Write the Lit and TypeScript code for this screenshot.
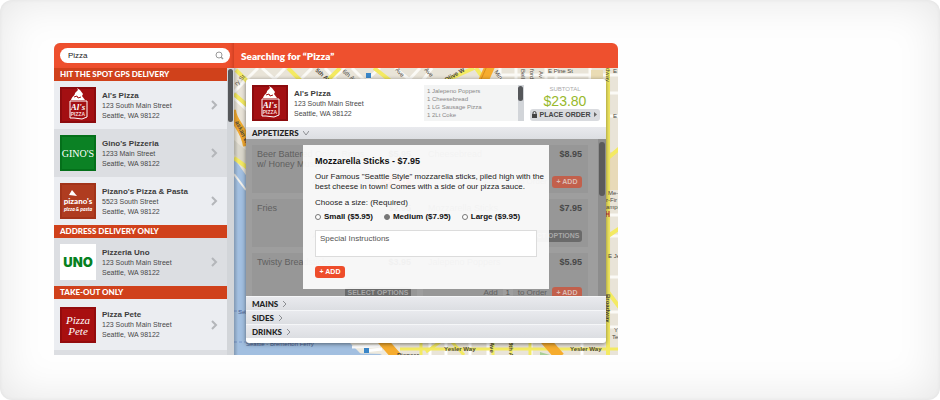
import { LitElement, html, svg, css } from "lit";
import { customElement, property } from "lit/decorators.js";

type Logo = "als" | "ginos" | "pizanos" | "uno" | "pete";
interface Place { name: string; street: string; logo: Logo; }
interface Group { title: string; places: Place[]; }
interface Dish { name: string; note?: string; price: string; options: boolean; }

const GROUPS: Group[] = [
  {
    title: "HIT THE SPOT GPS DELIVERY",
    places: [
      { name: "Al's Pizza", street: "123 South Main Street", logo: "als" },
      { name: "Gino's Pizzeria", street: "1233 Main Street", logo: "ginos" },
      { name: "Pizano's Pizza & Pasta", street: "5523 South Street", logo: "pizanos" },
    ],
  },
  { title: "ADDRESS DELIVERY ONLY", places: [{ name: "Pizzeria Uno", street: "123 South Main Street", logo: "uno" }] },
  { title: "TAKE-OUT ONLY", places: [{ name: "Pizza Pete", street: "123 South Main Street", logo: "pete" }] },
];

const DISHES: Dish[] = [
  { name: "Beer Battered Onion Rings", note: "w/ Honey Mustard", price: "$5.95", options: false },
  { name: "Cheesebread", price: "$8.95", options: false },
  { name: "Fries", price: "$2.95", options: false },
  { name: "Mozzarella Sticks", price: "$7.95", options: true },
  { name: "Twisty Breadsticks", price: "$3.95", options: true },
  { name: "Jalepeno Poppers", price: "$5.95", options: false },
];

const CART = ["1 Jalepeno Poppers", "1 Cheesebread", "1 LG Sausage Pizza", "1 2Lt Coke"];
const SIZES = [["Small", "$5.95"], ["Medium", "$7.95"], ["Large", "$9.95"]];

@customElement("place-logo")
export class PlaceLogo extends LitElement {
  @property() kind: Logo = "als";

  static styles = css`
    :host { display: block; width: 36px; height: 36px; flex: none; }
    svg { display: block; width: 100%; height: 100%; }
    .als { font: italic bold 9px "Liberation Serif", serif; }
    .small { font: bold 5px "Liberation Sans", sans-serif; }
    .ginos { font: 10px "Liberation Serif", serif; }
    .pizanos { font: 900 8px Lato, sans-serif; }
    .pasta { font: italic 900 5px Lato, sans-serif; }
    .uno { font: 900 13px Inter, "Liberation Sans", sans-serif; }
    .pete { font: italic 11px "Liberation Serif", serif; }
  `;

  private art() {
    switch (this.kind) {
      case "als":
        return svg`
          <rect width="36" height="36" fill="#8c0b0e"/>
          <rect x="2" y="2" width="32" height="32" fill="#a30f12"/>
          <path d="M11 13 C12 9 15 9 15 6 L18 3 L17 1 L20 3 L23 7 L22 9 L25 13 Z" fill="#fff"/>
          <path d="M14 10 l3 -1 l1 2 l3 -1" stroke="#a30f12" fill="none"/>
          <path d="M10 14 H27 V30 L22 32 L14 31 L10 31 Z" fill="none" stroke="#fff"/>
          <text class="als" x="18" y="23" text-anchor="middle" fill="#fff">Al's</text>
          <text class="small" x="18" y="29" text-anchor="middle" fill="#f6d8d8">PIZZA</text>`;
      case "ginos":
        return svg`
          <rect width="36" height="36" fill="#04701a"/>
          <rect x="2" y="2" width="32" height="32" fill="#0b8124"/>
          <text class="ginos" x="18" y="22" text-anchor="middle" fill="#fff">GINO'S</text>`;
      case "pizanos":
        return svg`
          <rect width="36" height="36" fill="#a23319"/>
          <rect x="2" y="2" width="32" height="32" fill="#af3c20"/>
          <path d="M9 12 L12 7 L17 13 Z" fill="#fff"/>
          <text class="pizanos" x="18" y="21" text-anchor="middle" fill="#fff">pizano's</text>
          <text class="pasta" x="18" y="28" text-anchor="middle" fill="#fff">pizza &amp; pasta</text>`;
      case "uno":
        return svg`
          <rect width="36" height="36" fill="#fff"/>
          <text class="uno" x="18" y="23" text-anchor="middle" fill="#06811f">UNO</text>`;
      case "pete":
        return svg`
          <rect width="36" height="36" fill="#930b0d"/>
          <rect x="2" y="2" width="32" height="32" fill="#a80f10"/>
          <text class="pete" x="18" y="17" text-anchor="middle" fill="#fff">Pizza</text>
          <text class="pete" x="18" y="28" text-anchor="middle" fill="#fff">Pete</text>`;
    }
  }

  render() {
    return html`<svg viewBox="0 0 36 36" aria-hidden="true">${this.art()}</svg>`;
  }
}

@customElement("street-map")
export class StreetMap extends LitElement {
  static styles = css`
    :host { display: block; }
    svg { display: block; width: 100%; height: 100%; }
    text { font: 6px "Liberation Sans", sans-serif; fill: #4d4a44; }
    .strong { font-weight: bold; fill: #4a483c; }
    .sea { fill: #4a5f92; }
  `;

  render() {
    return html`<svg viewBox="234 68 384 287" preserveAspectRatio="xMinYMin slice" aria-hidden="true">
      <rect x="234" y="68" width="384" height="287" fill="#e9e4d8"/>
      <g stroke="#fbfaf6" stroke-width="3" fill="none">
        <path d="M258 68 L234 92 M285 68 L262 92 M345 68 L325 84 M380 68 L362 84 M420 68 L405 84 M262 68 L280 84 M312 68 L296 84 M325 68 L340 84 M352 68 L368 84 M395 68 L415 84 M432 68 L420 84 M500 68 V84 M516 68 V84 M546 68 V84 M556 68 V84 M590 68 V84 M234 98 L247 110"/>
        <path d="M500 75 H618 M605 93 H618 M605 116 H618 M605 215 H618 M605 236 H618 M605 277 H618 M605 312 H618 M605 327 H618"/>
      </g>
      <path d="M591 70 h12 v12 h-12 z" fill="#eadcb4"/>
      <path d="M609 152 h9 v38 h-9 z" fill="#e8dab8"/>
      <g stroke="#f4ea62" stroke-width="4" fill="none">
        <path d="M236 70 L250 84 M234 94 L248 106 M288 68 L304 84 M340 68 L318 90 M374 68 L392 82 M438 84 L474 68 M476 68 L486 82"/>
        <path d="M608 68 V355 M608 158 L620 148 M608 236 L620 228 M608 292 L620 308"/>
      </g>
      <path d="M490 66 L482 84" stroke="#f6ac2e" stroke-width="10"/>
      <path d="M487 66 L479 84" stroke="#d98b1c"/>
      <path d="M234 158 L248 178 V343 H352 L362 355 H234 Z" fill="#a2bfe0"/>
      <path d="M234 140 L248 152 V172 L234 154 Z" fill="#d9d6ca"/>
      <path d="M234 158 L248 168" stroke="#f4ea62" stroke-width="4"/>
      <path d="M234 174 L246 190" stroke="#f2f0ea" stroke-width="2"/>
      <path d="M232 110 C233 124 244 126 247 146" stroke="#f0a92f" stroke-width="8" fill="none"/>
      <path d="M234 311 H247 M234 342 H350" stroke="#7b98cc" stroke-dasharray="3 2"/>
      <path d="M350 343 H400 V355 H362 Z" fill="#eeeade"/>
      <path d="M234 350 L382 354 L380 355 H234 Z" fill="#a2bfe0"/>
      <path d="M352 347 L380 346 M364 351 L382 349 M430 343 V355 M446 343 V355 M470 343 V355 M488 343 V355 M531 343 V355 M582 343 V355" stroke="#fff" stroke-width="3"/>
      <path d="M400 349 H618 M421 343 V355 M426 352 L440 342 M452 342 L464 355 M493 342 V355 M511 342 V355 M530 343 V355" stroke="#f4ea62" stroke-width="3" fill="none"/>
      <path d="M382 340 L397 357 M545 340 L560 357" stroke="#f6ac2e" stroke-width="10"/>
      <path d="M540 352 L550 355 H540 Z" fill="#a9cf97"/>
      <rect x="366" y="73" width="5" height="5" fill="#3a86c8"/>
      <rect x="364" y="348" width="5" height="5" fill="#3a86c8"/>
      <text transform="translate(237 86) rotate(-48)">ry St</text>
      <text class="strong" transform="translate(235 122) rotate(64)">askan W</text>
      <text class="strong" transform="translate(315 71) rotate(40)">5th Av</text>
      <text transform="translate(342 72) rotate(40)">6th Av</text>
      <text transform="translate(395 70) rotate(48)">Ave</text>
      <text transform="translate(424 70) rotate(48)">Ave</text>
      <text class="strong" transform="translate(446 82) rotate(-30)">Olive W</text>
      <text transform="translate(494 72) rotate(55)">Min</text>
      <text transform="translate(521 69) rotate(90)">Bell</text>
      <text transform="translate(530 69) rotate(90)">ford</text>
      <text transform="translate(539 71) rotate(90)">Av</text>
      <text x="548" y="73">E Pine St</text>
      <text transform="translate(606 68) rotate(90)">dway</text>
      <text x="613" y="73">E</text>
      <text x="613" y="118">E</text>
      <text x="608" y="195">Me-</text>
      <text x="606" y="202">r-Fir</text>
      <text x="606" y="209">ampe</text>
      <path d="M606 211 v6 M606 214 h3 M609 211 v6" stroke="#b8263a"/>
      <text x="608" y="258">E Je</text>
      <text class="strong" transform="translate(606 294) rotate(90)">Broadway</text>
      <text x="614" y="332">Y</text>
      <text x="612" y="339">Te</text>
      <text class="sea" x="238" y="314">Seattle</text>
      <text class="sea" x="246" y="346">Seattle - Bremerton Ferry</text>
      <text class="strong" x="444" y="351">Yesler Way</text>
      <text class="strong" x="570" y="351">Yesler Way</text>
      <text class="strong" x="397" y="357">Pioneer</text>
      <text class="strong" transform="translate(490 342) rotate(90)">Ave</text>
      <text class="strong" transform="translate(509 342) rotate(90)">8th A</text>
    </svg>`;
  }
}

@customElement("app-root")
export class AppRoot extends LitElement {
  static styles = css`
    :host { display: block; font: 8px/10px "Liberation Sans", Arial, sans-serif; color: #444; }
    * { box-sizing: border-box; }
    h1, h2, h3, p, ul, fieldset { margin: 0; padding: 0; border: 0; list-style: none; }
    button, input, textarea { font: inherit; color: inherit; margin: 0; border: 0; padding: 0; }
    a { color: inherit; text-decoration: none; }

    .page { min-height: 100vh; padding: 43px 54px; border-radius: 12px; background: #fefefe; box-shadow: inset 0 0 44px rgba(0, 0, 0, 0.1), inset 0 0 4px rgba(0, 0, 0, 0.05); }
    .app { display: grid; grid-template-columns: 180px minmax(384px, 1fr); width: 60vw; min-width: 564px; border-radius: 6px 6px 0 0; overflow: hidden; }
    .bar { display: flex; align-items: center; height: 25px; background: #ee502e; }

    .side { display: flex; flex-direction: column; background: #dcdee2; }
    .side .bar { padding: 0 4px 0 6px; box-shadow: inset -4px 0 4px -3px rgba(120, 20, 0, 0.35); }
    .search { display: flex; align-items: center; flex: 1; height: 15px; padding: 0 6px 0 8px; border-radius: 8px; background: #fff; }
    .search input { flex: 1; min-width: 0; background: none; outline: none; color: #222; }
    .search svg { width: 9px; height: 9px; }
    .scroll { display: flex; flex: 1; }
    .list { flex: 1; }
    .track { width: 7px; padding: 1px; background: #d2d5d9; }
    .thumb { width: 5px; height: 53px; border-radius: 3px; background: #55575a; }
    .group { height: 13px; padding-left: 6px; background: #d0411b; color: #fff; font: 900 8px/13px Lato, sans-serif; }
    .place { display: flex; align-items: center; gap: 6px; height: 48px; padding: 0 9px 0 6px; background: #ebedf1; }
    .place.alt { background: #dcdee2; }
    .place.last { height: 51px; }
    .info { flex: 1; color: #484848; font-size: 7px; }
    .name { font-size: 8px; font-weight: bold; line-height: 11px; color: #3c3c3c; }
    .place svg { width: 7px; height: 10px; }

    .main { display: flex; flex-direction: column; }
    .main .bar { padding-left: 7px; }
    .main h1 { color: #fff; font: 800 10px/14px Lato, sans-serif; }
    .stage { position: relative; flex: 1; padding: 11px 12px 12px; overflow: hidden; }
    .stage::after { content: ""; position: absolute; inset: 0 auto 0 0; width: 4px; background: linear-gradient(90deg, rgba(0, 0, 0, 0.2), transparent); }
    street-map { position: absolute; inset: 0; }
    .card { position: relative; padding-bottom: 5px; border-radius: 3px; background: #fff; box-shadow: 0 1px 4px rgba(0, 0, 0, 0.5); }
    .head { display: flex; align-items: center; gap: 6px; padding: 6px; }
    .cart { display: flex; width: 100px; height: 36px; background: #f3f4f4; color: #888; font-size: 6px; line-height: 8px; }
    .cart ul { flex: 1; padding: 2px 3px; }
    .cart .track { width: 6px; padding: 1px 0; }
    .cart .thumb { height: 15px; }
    .total { display: flex; flex-direction: column; align-items: center; width: 70px; }
    .label { color: #aaa; font-size: 6px; line-height: 7px; }
    .sum { color: #98b92c; font-size: 14px; line-height: 16px; }
    .order { display: flex; align-items: center; justify-content: center; gap: 3px; width: 100%; height: 12px; border-radius: 3px; background: #d9dbdf; color: #444; font-size: 7px; font-weight: bold; white-space: nowrap; }
    .order svg { width: 5px; height: 7px; }
    .section { display: flex; align-items: center; gap: 4px; width: 100%; height: 14px; padding-left: 6px; background: linear-gradient(#e9eaee, #dcdee2); border-top: 1px solid #f5f6f8; color: #222; font: 900 8px/12px Lato, sans-serif; }
    .section.open { height: 12px; border: 0; }
    .section svg { width: 6px; height: 6px; }

    .menu { position: relative; height: 157px; overflow: hidden; background: #9e9e9e; }
    .dishes { display: grid; grid-template-columns: 1fr 1fr; grid-template-rows: 48px 48px 51px; gap: 6px; padding: 6px 18px 0 6px; }
    .dish { display: flex; flex-wrap: wrap; align-content: space-between; justify-content: space-between; padding: 4px 6px 5px 5px; background: #979797; color: #606060; font-size: 9px; line-height: 10px; }
    .price { color: #484848; font-weight: bold; }
    .act { display: flex; align-items: center; justify-content: flex-end; gap: 5px; width: 100%; font-size: 8px; }
    .qty { width: 10px; height: 9px; text-align: center; background: #9e9e9e; color: #555; }
    .add { height: 12px; width: 30px; border-radius: 3px; background: #ee4d2b; color: #fff; font: bold 7px/12px "Liberation Sans", Arial, sans-serif; text-align: center; }
    .dish .add { background: #c2604c; color: #dcbcb4; }
    .dish .options { width: 66px; background: #6a6a6a; color: #a8a8a8; white-space: nowrap; }
    .veil { position: absolute; inset: 0; display: flex; justify-content: center; align-items: flex-start; padding-top: 6px; }
    .menu .rail { position: absolute; top: 0; right: 0; width: 8px; height: 100%; padding: 3px 1px; background: #8d8d8d; }
    .menu .rail .thumb { height: 54px; width: 6px; background: #5b5b5b; }
    .modal { display: flex; flex-direction: column; width: 246px; padding: 10px 12px 11px; background: rgba(255, 255, 255, 0.92); color: #222; }
    .modal h2 { color: #111; font-size: 9px; line-height: 12px; }
    .modal p { margin-top: 5px; white-space: nowrap; }
    .modal fieldset { margin-top: 6px; }
    .modal legend { padding: 0; margin-bottom: 4px; }
    .sizes { display: flex; gap: 11px; color: #111; font-weight: bold; }
    .sizes label { display: flex; align-items: center; gap: 3px; }
    .sizes input { appearance: none; width: 6px; height: 6px; border: 1px solid #777; border-radius: 50%; background: #fff; }
    .sizes input:checked { background: #777; }
    .modal textarea { display: block; height: 27px; margin: 8px 0 9px; padding: 3px 4px; border: 1px solid #dcdcdc; background: #fff; resize: none; }
    .modal textarea::placeholder { color: #555; opacity: 1; }
  `;

  private chevron() {
    return html`<svg viewBox="0 0 7 10" aria-hidden="true"><path d="M1 1 L5 5 L1 9" fill="none" stroke="#b4b6ba" stroke-width="2"/></svg>`;
  }

  private arrow(open: boolean) {
    return html`<svg viewBox="0 0 6 6" aria-hidden="true"><path d=${open ? "M0 1 L3 5 L6 1" : "M1 0 L4 3 L1 6"} fill="none" stroke="#8c8e92"/></svg>`;
  }

  private info(name: string, street: string) {
    return html`<div class="info"><h3 class="name">${name}</h3><div>${street}</div><div>Seattle, WA 98122</div></div>`;
  }

  private place(p: Place, tone: string) {
    return html`<a class="place ${tone}" href="#${p.logo}">
      <place-logo .kind=${p.logo}></place-logo>${this.info(p.name, p.street)}${this.chevron()}
    </a>`;
  }

  private dish(d: Dish) {
    return html`<li class="dish">
      <span>${d.name}${d.note ? html`<br>${d.note}` : ""}</span><span class="price">${d.price}</span>
      <div class="act">
        ${d.options
          ? html`<button class="add options">SELECT OPTIONS</button>`
          : html`<span>Add</span><input class="qty" aria-label="Quantity of ${d.name}" value="1"><span>to Order</span><button class="add">+ ADD</button>`}
      </div>
    </li>`;
  }

  render() {
    const tones = ["", "alt", "", "alt", "last"];
    let n = 0;
    return html`<div class="page"><div class="app">
      <aside class="side">
        <div class="bar">
          <label class="search">
            <input type="text" aria-label="Search restaurants" .value=${"Pizza"}>
            <svg viewBox="0 0 9 9" aria-hidden="true"><circle cx="4" cy="4" r="3" fill="none" stroke="#999"/><path d="M6 6 L8 8" stroke="#999" stroke-width="1.4"/></svg>
          </label>
        </div>
        <div class="scroll">
          <nav class="list">
            ${GROUPS.map((g) => html`<h2 class="group">${g.title}</h2>${g.places.map((p) => this.place(p, tones[n++]))}`)}
          </nav>
          <div class="track"><div class="thumb"></div></div>
        </div>
      </aside>
      <main class="main">
        <header class="bar"><h1>Searching for “Pizza”</h1></header>
        <div class="stage">
          <street-map></street-map>
          <section class="card">
            <div class="head">
              <place-logo .kind=${"als"}></place-logo>
              ${this.info("Al's Pizza", "123 South Main Street")}
              <div class="cart"><ul>${CART.map((c) => html`<li>${c}</li>`)}</ul><div class="track"><div class="thumb"></div></div></div>
              <div class="total">
                <span class="label">SUBTOTAL</span>
                <span class="sum">$23.80</span>
                <button class="order">
                  <svg viewBox="0 0 5 7" aria-hidden="true"><path d="M0 3 h5 v4 h-5 z" fill="#444"/><path d="M1 3 V2 a1.5 1.5 0 0 1 3 0 V3" fill="none" stroke="#444"/></svg>
                  PLACE ORDER
                  <svg viewBox="0 0 5 7" aria-hidden="true"><path d="M1 1 L4 3.500 L1 6 Z" fill="#666"/></svg>
                </button>
              </div>
            </div>
            <button class="section open">APPETIZERS ${this.arrow(true)}</button>
            <div class="menu">
              <ul class="dishes">${DISHES.map((d) => this.dish(d))}</ul>
              <div class="rail"><div class="thumb"></div></div>
              <div class="veil">
                <form class="modal" @submit=${(e: Event) => e.preventDefault()}>
                  <h2>Mozzarella Sticks - $7.95</h2>
                  <p>Our Famous "Seattle Style" mozzarella sticks, piled high with the<br>best cheese in town! Comes with a side of our pizza sauce.</p>
                  <fieldset>
                    <legend>Choose a size: (Required)</legend>
                    <div class="sizes">
                      ${SIZES.map(([s, p]) => html`<label><input type="radio" name="size" ?checked=${s === "Medium"}>${s} (${p})</label>`)}
                    </div>
                  </fieldset>
                  <textarea aria-label="Special Instructions" placeholder="Special Instructions"></textarea>
                  <button class="add">+ ADD</button>
                </form>
              </div>
            </div>
            ${["MAINS", "SIDES", "DRINKS"].map((s) => html`<button class="section">${s} ${this.arrow(false)}</button>`)}
          </section>
        </div>
      </main>
    </div></div>`;
  }
}
